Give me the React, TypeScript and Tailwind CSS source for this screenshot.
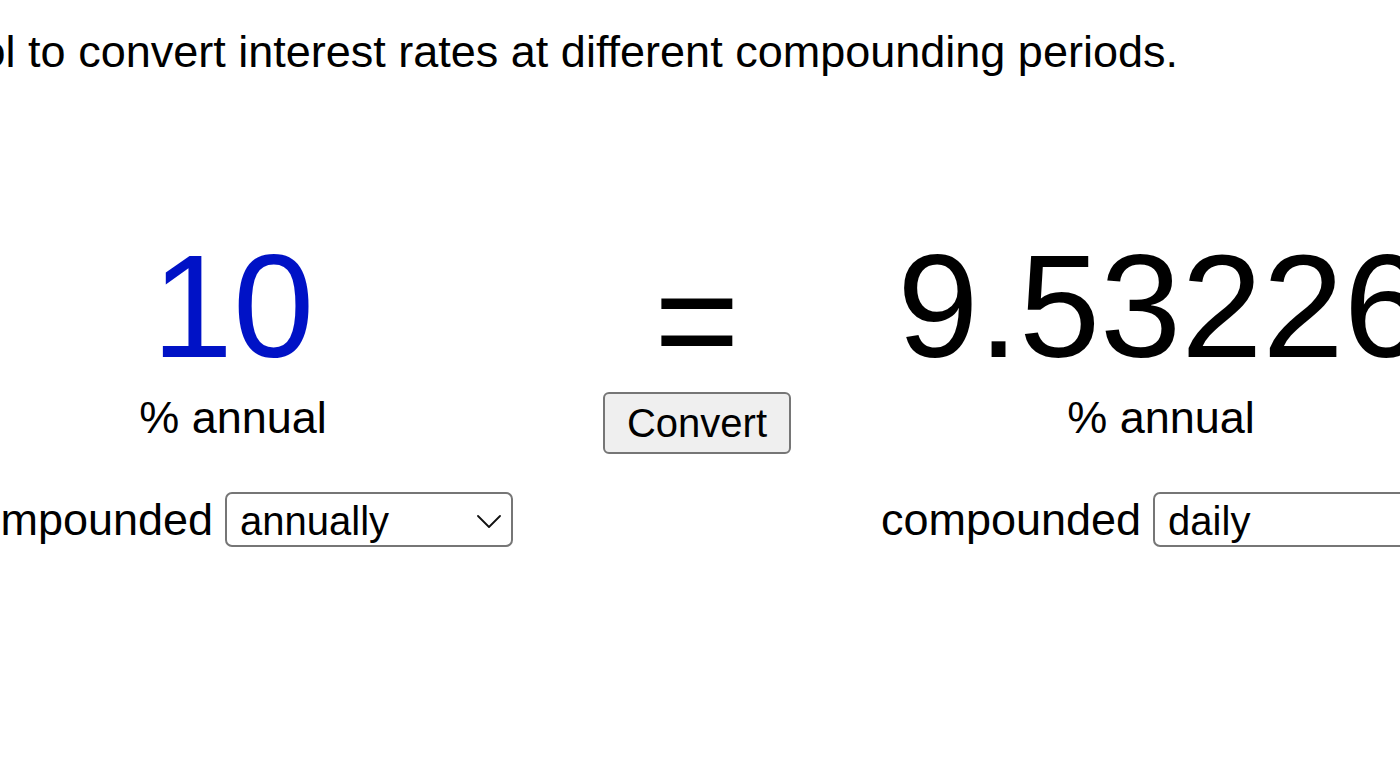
import React from "react";

function Chevron() {
  return (
    <svg
      className="pointer-events-none absolute left-[250px] top-[21px]"
      width="24"
      height="13"
      viewBox="0 0 24 13"
      fill="none"
    >
      <path d="M1 1 L12 12 L23 1" stroke="#111" strokeWidth="1.8" strokeLinecap="round" strokeLinejoin="round" />
    </svg>
  );
}

function CompoundRow({ value }: { value: string }) {
  return (
    <div className="flex items-baseline whitespace-nowrap">
      <span className="text-[45px] leading-[44px] mr-[12px]">compounded</span>
      <button
        type="button"
        className="relative block w-[288px] h-[55px] border-2 border-[#767676] rounded-[7px] bg-white pl-[13px] pt-[2px] text-left text-[40px] leading-[44px] text-black font-['Liberation_Sans',Arial,sans-serif] overflow-visible"
      >
        <span className="block">{value}</span>
        <Chevron />
      </button>
    </div>
  );
}

export default function App() {
  return (
    <div className="w-[1400px] h-[782px] overflow-hidden bg-white text-black font-['Liberation_Sans',Arial,sans-serif]">
      <p className="ml-[-232px] pt-[26px] text-[45px] leading-[52px] whitespace-nowrap">
        Use this tool to convert interest rates at different compounding periods.
      </p>
      <div className="ml-[1px] mt-[156px] grid grid-cols-[464px_464px_464px] items-start">
        <div className="flex flex-col items-center">
          <div className="text-[146px] leading-[146px] text-[#0012c6] whitespace-nowrap">10</div>
          <div className="mt-[16px] text-[45px] leading-[44px] whitespace-nowrap">% annual</div>
          <div className="mt-[52px] flex flex-col items-center">
            <CompoundRow value="annually" />
          </div>
        </div>
        <div className="flex flex-col items-center">
          <div className="h-[146px] text-[146px] leading-[174px] whitespace-nowrap">=</div>
          <button className="mt-[12px] px-[22px] py-[6px] border-2 border-[#767676] rounded-[6px] bg-[#efefef] text-[40px] leading-[46px] text-black font-['Liberation_Sans',Arial,sans-serif]">
            Convert
          </button>
        </div>
        <div className="flex flex-col items-center">
          <div className="text-[146px] leading-[146px] whitespace-nowrap">9.53226</div>
          <div className="mt-[16px] text-[45px] leading-[44px] whitespace-nowrap">% annual</div>
          <div className="mt-[52px] flex flex-col items-center">
            <CompoundRow value="daily" />
          </div>
        </div>
      </div>
    </div>
  );
}
